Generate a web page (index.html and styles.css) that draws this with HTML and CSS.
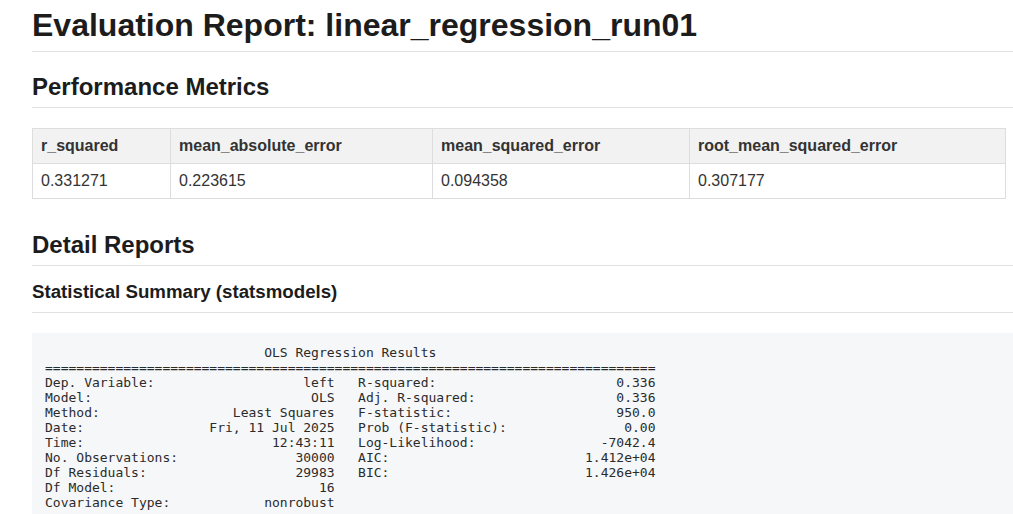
FILE: index.html
```html
<!DOCTYPE html>
<html lang="en">
<head>
<meta charset="utf-8">
<title>Evaluation Report: linear_regression_run01</title>
<link rel="stylesheet" href="styles.css">
</head>
<body>
<main class="report">
  <h1 class="title">Evaluation Report: linear_regression_run01</h1>

  <h2 class="section">Performance Metrics</h2>
  <table class="metrics">
    <thead>
      <tr>
        <th class="c1">r_squared</th>
        <th class="c2">mean_absolute_error</th>
        <th class="c3">mean_squared_error</th>
        <th class="c4">root_mean_squared_error</th>
      </tr>
    </thead>
    <tbody>
      <tr>
        <td>0.331271</td>
        <td>0.223615</td>
        <td>0.094358</td>
        <td>0.307177</td>
      </tr>
    </tbody>
  </table>

  <h2 class="section section-detail">Detail Reports</h2>
  <h3 class="subsection">Statistical Summary (statsmodels)</h3>
  <pre class="summary">                            OLS Regression Results                            
==============================================================================
Dep. Variable:                   left   R-squared:                       0.336
Model:                            OLS   Adj. R-squared:                  0.336
Method:                 Least Squares   F-statistic:                     950.0
Date:                Fri, 11 Jul 2025   Prob (F-statistic):               0.00
Time:                        12:43:11   Log-Likelihood:                -7042.4
No. Observations:               30000   AIC:                         1.412e+04
Df Residuals:                   29983   BIC:                         1.426e+04
Df Model:                          16                                         
Covariance Type:            nonrobust                                         
</pre>
</main>
</body>
</html>
```

FILE: styles.css
```css
html, body {
  margin: 0;
  padding: 0;
  background: #ffffff;
}

body {
  font-family: "Liberation Sans", Arial, Helvetica, sans-serif;
  color: #1c1c1c;
  overflow: hidden;
}

.report {
  padding: 0 0 0 32px;
}

.title {
  margin: 5px 0 0 0;
  font-size: 32px;
  line-height: 40px;
  font-weight: bold;
  padding-bottom: 6px;
  border-bottom: 1px solid #e1e1e1;
  white-space: nowrap;
}

.section {
  margin: 21px 0 0 0;
  font-size: 24px;
  line-height: 28px;
  font-weight: bold;
  padding-bottom: 6px;
  border-bottom: 1px solid #e1e1e1;
}

.section-detail {
  margin-top: 32px;
}

.subsection {
  margin: 15px 0 0 0;
  font-size: 18.7px;
  line-height: 22px;
  font-weight: bold;
  padding-bottom: 9px;
  border-bottom: 1px solid #e1e1e1;
}

.metrics {
  margin-top: 20px;
  width: 973px;
  border-collapse: collapse;
  table-layout: fixed;
  font-size: 16px;
  line-height: 18px;
  color: #333333;
}

.metrics th,
.metrics td {
  box-sizing: border-box;
  border: 1px solid #dddddd;
  padding: 8px 8px;
  text-align: left;
}

.metrics th {
  background: #f2f2f2;
  font-weight: bold;
}

.metrics .c1 { width: 138px; }
.metrics .c2 { width: 262px; }
.metrics .c3 { width: 257px; }
.metrics .c4 { width: 316px; }

.summary {
  margin: 20px 0 0 0;
  padding: 12px 13px 13px 13px;
  background: #f6f7f9;
  font-family: "DejaVu Sans Mono", "Liberation Mono", monospace;
  font-size: 13px;
  line-height: 15px;
  color: #2b2b2b;
  overflow: hidden;
}
```
